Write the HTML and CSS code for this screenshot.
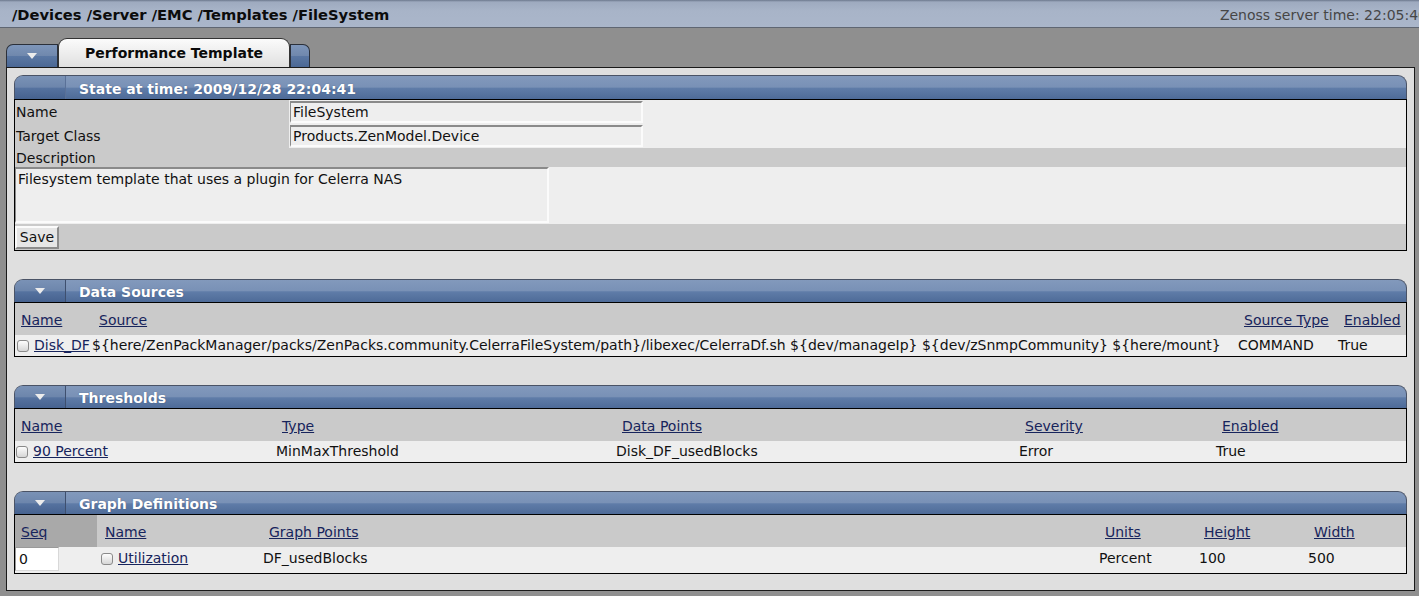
FILE: index.html
```html
<!DOCTYPE html>
<html>
<head>
<meta charset="utf-8">
<title>Performance Template</title>
<link rel="stylesheet" href="styles.css">
</head>
<body>
<div class="topbar">
  <span class="crumbs">/Devices /Server /EMC /Templates /FileSystem</span>
  <span class="clock">Zenoss server time: 22:05:40</span>
</div>
<div class="tabs">
  <div class="tab tab-menu"><span class="tri"></span></div>
  <div class="tab tab-active">Performance Template</div>
  <div class="tab tab-end"></div>
</div>
<div class="panel">
  <section class="box">
    <div class="box-head box-head-tall">
      <div class="box-toggle box-toggle-plain"></div>
      <div class="box-title">State at time: 2009/12/28 22:04:41</div>
    </div>
    <table class="grid form">
      <colgroup><col class="f-label"><col class="f-value"></colgroup>
      <tr class="r-field">
        <td class="lbl">Name</td>
        <td class="val"><input class="field" type="text" value="FileSystem"></td>
      </tr>
      <tr class="r-field">
        <td class="lbl">Target Class</td>
        <td class="val"><input class="field" type="text" value="Products.ZenModel.Device"></td>
      </tr>
      <tr class="r-desc">
        <td class="lbl" colspan="2">Description</td>
      </tr>
      <tr class="r-area">
        <td class="val-area" colspan="2"><textarea class="area">Filesystem template that uses a plugin for Celerra NAS</textarea></td>
      </tr>
      <tr class="r-save">
        <td class="lbl-save" colspan="2"><button class="btn" type="button">Save</button></td>
      </tr>
    </table>
  </section>

  <section class="box">
    <div class="box-head">
      <div class="box-toggle"><span class="tri"></span></div>
      <div class="box-title">Data Sources</div>
    </div>
    <table class="grid list ds">
      <colgroup><col class="ds1"><col class="ds2"><col class="ds3"><col class="ds4"></colgroup>
      <tr class="r-head">
        <th class="first"><a href="#">Name</a></th>
        <th><a href="#">Source</a></th>
        <th class="tight"><a href="#">Source Type</a></th>
        <th class="tight"><a href="#">Enabled</a></th>
      </tr>
      <tr class="r-data">
        <td><input class="cb" type="checkbox"><a href="#">Disk_DF</a></td>
        <td class="nopad">${here/ZenPackManager/packs/ZenPacks.community.CelerraFileSystem/path}/libexec/CelerraDf.sh ${dev/manageIp} ${dev/zSnmpCommunity} ${here/mount}</td>
        <td class="nopad">COMMAND</td>
        <td class="nopad">True</td>
      </tr>
    </table>
  </section>

  <section class="box">
    <div class="box-head">
      <div class="box-toggle"><span class="tri"></span></div>
      <div class="box-title">Thresholds</div>
    </div>
    <table class="grid list thr">
      <colgroup><col class="t1"><col class="t2"><col class="t3"><col class="t4"><col class="t5"></colgroup>
      <tr class="r-head">
        <th class="first"><a href="#">Name</a></th>
        <th><a href="#">Type</a></th>
        <th><a href="#">Data Points</a></th>
        <th><a href="#">Severity</a></th>
        <th><a href="#">Enabled</a></th>
      </tr>
      <tr class="r-data">
        <td class="nopad"><input class="cb" type="checkbox"><a href="#">90 Percent</a></td>
        <td>MinMaxThreshold</td>
        <td>Disk_DF_usedBlocks</td>
        <td>Error</td>
        <td>True</td>
      </tr>
    </table>
  </section>

  <section class="box">
    <div class="box-head">
      <div class="box-toggle"><span class="tri"></span></div>
      <div class="box-title">Graph Definitions</div>
    </div>
    <table class="grid list gd">
      <colgroup><col class="g1"><col class="g2"><col class="g3"><col class="g4"><col class="g5"><col class="g6"></colgroup>
      <tr class="r-head">
        <th class="first seq"><a href="#">Seq</a></th>
        <th class="wide"><a href="#">Name</a></th>
        <th><a href="#">Graph Points</a></th>
        <th><a href="#">Units</a></th>
        <th class="tight"><a href="#">Height</a></th>
        <th><a href="#">Width</a></th>
      </tr>
      <tr class="r-data r-tall">
        <td class="nopad"><input class="seqin" type="text" value="0"></td>
        <td class="pad3"><input class="cb" type="checkbox"><a href="#">Utilization</a></td>
        <td>DF_usedBlocks</td>
        <td>Percent</td>
        <td>100</td>
        <td>500</td>
      </tr>
    </table>
  </section>
</div>
</body>
</html>
```

FILE: styles.css
```css
html, body {
  margin: 0;
  padding: 0;
}
body {
  background: #8f8f8f;
  font-family: "DejaVu Sans", Verdana, sans-serif;
  font-size: 14px;
  color: #111;
  overflow: hidden;
}

/* ---------- top bar ---------- */
.topbar {
  height: 27px;
  border-bottom: 1px solid #5f6672;
  background: linear-gradient(#6c788d 0, #9eaabf 2px, #a8b4c8 40%, #aab6ca 100%);
  display: flex;
  align-items: center;
  justify-content: space-between;
  padding-left: 12px;
  overflow: hidden;
}
.crumbs {
  font-weight: bold;
  font-size: 14.7px;
  color: #0c0c0c;
  white-space: nowrap;
  padding-top: 2px;
}
.clock {
  color: #464646;
  font-size: 14px;
  white-space: nowrap;
  margin-right: -8px;
  padding-top: 2px;
}

/* ---------- tabs ---------- */
.tabs {
  display: flex;
  align-items: flex-end;
  height: 29px;
  margin: 10px 0 0 6px;
}
.tab {
  box-sizing: border-box;
  border: 1px solid #2b303a;
  border-bottom: none;
}
.tab-menu {
  width: 52px;
  height: 23px;
  border-radius: 7px 0 0 0;
  background: linear-gradient(#7e96ba 0%, #7088ad 48%, #5a77a3 52%, #4b6895 100%);
  display: flex;
  justify-content: center;
  align-items: center;
}
.tab-active {
  width: 232px;
  height: 29px;
  border-color: #333;
  border-radius: 9px 9px 0 0;
  background: linear-gradient(#fbfbfb 0%, #ececec 55%, #e0e0e0 100%);
  font-weight: bold;
  text-align: center;
  line-height: 29px;
  color: #0a0a0a;
}
.tab-end {
  width: 20px;
  height: 23px;
  border-radius: 0 7px 0 0;
  background: linear-gradient(#7e96ba 0%, #7088ad 48%, #5a77a3 52%, #4b6895 100%);
}
.tri {
  display: block;
  width: 0;
  height: 0;
  border-left: 5px solid transparent;
  border-right: 5px solid transparent;
  border-top: 6px solid #ececec;
}

/* ---------- main panel ---------- */
.panel {
  margin: 0 4px 0 6px;
  border: 1px solid #1a1a1a;
  background: #dfdfdf;
  padding: 7px 7px 16px;
  display: flex;
  flex-direction: column;
  gap: 28px;
}

/* ---------- section boxes ---------- */
.box-head {
  height: 22px;
  border: 1px solid #4a5366;
  border-bottom: none;
  border-radius: 9px 9px 0 0;
  background: linear-gradient(#8299bc 0%, #7991b6 48%, #5f7ca8 54%, #4e6b98 100%);
  display: flex;
  align-items: stretch;
  overflow: hidden;
}
.box-head-tall {
  height: 23px;
}
.box-toggle {
  width: 50px;
  border-right: 1px solid #3e4f6e;
  background: linear-gradient(#7a92b6 0%, #6d86ac 48%, #55729f 54%, #46628f 100%);
  display: flex;
  justify-content: center;
  align-items: center;
  flex: none;
}
.box-toggle-plain {
  border-right: 1px solid #5a7198;
}
.box-title {
  color: #fff;
  font-weight: bold;
  padding-left: 13px;
  display: flex;
  align-items: center;
  text-shadow: 0 0 1px rgba(30, 40, 70, 0.5);
  padding-top: 2px;
  white-space: nowrap;
}

/* ---------- tables ---------- */
.grid {
  width: 100%;
  border: 1px solid #000;
  border-collapse: separate;
  border-spacing: 0;
  table-layout: fixed;
}
.grid td, .grid th {
  padding: 0;
  white-space: nowrap;
  overflow: visible;
}
.grid a {
  color: #17245c;
  text-decoration: underline;
}

/* state form */
.f-label { width: 274px; }
.f-value { width: 1117px; }
.r-field { height: 24px; }
.r-field .lbl {
  background: #cacaca;
  padding-left: 1px;
}
.r-field .val {
  background: #eeeeee;
  padding: 1px 0 1px 1px;
}
.field {
  box-sizing: border-box;
  display: block;
  width: 353px;
  height: 22px;
  margin: 0;
  padding: 0 0 0 2px;
  border: 2px solid;
  border-color: #8a8a8a #fbfbfb #fbfbfb #8a8a8a;
  border-left-width: 1px;
  background: #eeeeee;
  font: inherit;
  color: #111;
}
.r-desc { height: 19px; }
.r-desc .lbl {
  background: #cacaca;
  padding-left: 1px;
  vertical-align: bottom;
  line-height: 18px;
}
.r-area { height: 57px; }
.val-area {
  background: #eeeeee;
  vertical-align: top;
}
.area {
  box-sizing: border-box;
  display: block;
  width: 534px;
  height: 56px;
  margin: 0;
  padding: 2px 2px;
  border: 2px solid;
  border-color: #8a8a8a #fbfbfb #fbfbfb #8a8a8a;
  border-left-width: 1px;
  background: #eeeeee;
  font: inherit;
  color: #111;
  resize: none;
}
.r-save { height: 26px; }
.lbl-save {
  background: #cacaca;
  vertical-align: middle;
}
.btn {
  box-sizing: border-box;
  width: 44px;
  height: 23px;
  margin: 0;
  padding: 0;
  border: 2px solid;
  border-color: #fbfbfb #8c8c8c #8c8c8c #fbfbfb;
  background: #e6e6e6;
  font: inherit;
  color: #111;
  display: block;
}

/* lists */
.r-head { height: 32px; }
.r-head th {
  background: #cacaca;
  text-align: left;
  font-weight: normal;
  padding: 2px 0 0 7px;
  vertical-align: middle;
}
.r-head th.first { padding-left: 6px; }
.r-head th.tight { padding-left: 6px; }
.r-head th.wide { padding-left: 8px; }
.r-head th.seq { background: #a9a9a9; }
.r-data { height: 21px; }
.r-data td {
  background: #eeeeee;
  padding: 0 0 0 1px;
  vertical-align: middle;
  line-height: 17px;
}
.r-data td.nopad { padding-left: 0; }
.r-data td.pad3 { padding-left: 3px; }
.r-tall { height: 26px; }
.r-tall td { padding-bottom: 3px; }
.r-tall td.nopad { padding-bottom: 2px; }

.cb {
  appearance: none;
  -webkit-appearance: none;
  box-sizing: border-box;
  width: 12px;
  height: 12px;
  margin: 0 5px 0 1px;
  border: 1px solid #8a8a8a;
  border-radius: 3px;
  background: linear-gradient(#fdfdfd, #d6d6d6);
  vertical-align: -2px;
}
.seqin {
  box-sizing: border-box;
  display: block;
  width: 44px;
  height: 24px;
  margin: 0;
  padding: 0 0 0 3px;
  border: 1px solid;
  border-color: #9a9a9a #d8d8d8 #d8d8d8 #9a9a9a;
  background: #fff;
  font: inherit;
  color: #111;
}

.ds1 { width: 77px; }
.ds2 { width: 1146px; }
.ds3 { width: 100px; }
.ds4 { width: 68px; }

.t1 { width: 260px; }
.t2 { width: 340px; }
.t3 { width: 403px; }
.t4 { width: 197px; }
.t5 { width: 191px; }

.g1 { width: 82px; }
.g2 { width: 165px; }
.g3 { width: 836px; }
.g4 { width: 100px; }
.g5 { width: 109px; }
.g6 { width: 99px; }
```
